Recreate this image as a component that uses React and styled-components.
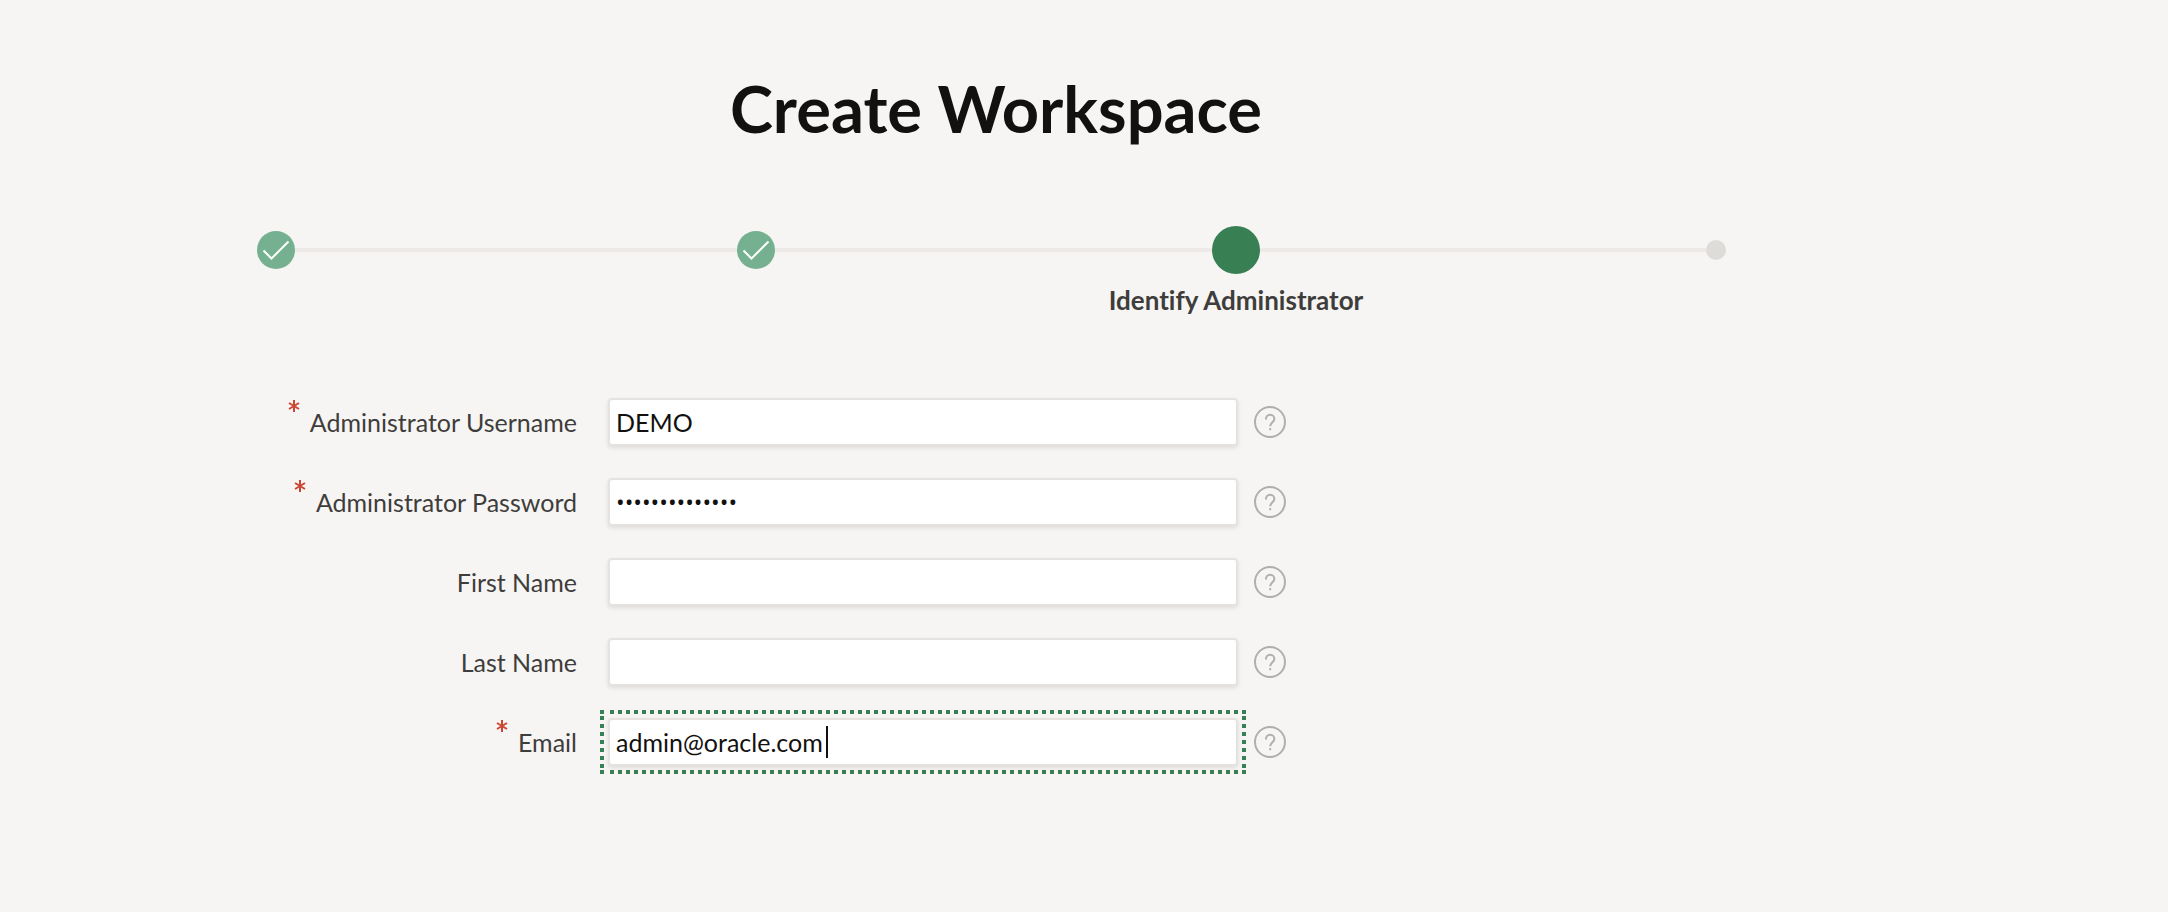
import React, { useState } from 'react';
import styled, { createGlobalStyle } from 'styled-components';

const GlobalStyle = createGlobalStyle`
  *, *::before, *::after { box-sizing: border-box; }
  body {
    margin: 0;
    background: #f6f5f3;
    color: #3f3d3b;
    font-family: Lato, "Open Sans", sans-serif;
    font-size: 25px;
    font-variant-ligatures: none;
    line-height: 32px;
  }
`;

const Page = styled.main`
  padding: 64px 212px 136px 36px;
`;

const Title = styled.h1`
  margin: 0;
  color: #12110f;
  font-size: 65px;
  font-weight: 700;
  line-height: 88px;
  text-align: center;
`;

const Steps = styled.ol`
  display: grid;
  grid-template-columns: repeat(4, 1fr);
  margin: 72px 0 0;
  padding: 0;
  list-style: none;
`;

const Step = styled.li`
  display: grid;
  justify-items: center;
  align-content: start;
  row-gap: 8px;
`;

const Track = styled.div`
  display: grid;
  grid-template-columns: 1fr auto 1fr;
  align-items: center;
  width: 100%;
  height: 52px;
`;

const Rail = styled.span`
  height: 4px;
  background: ${(p) => (p.$hidden ? 'transparent' : '#ece9e6')};
`;

const markers = {
  done: { size: 38, color: '#75b190' },
  current: { size: 48, color: '#387f54' },
  todo: { size: 20, color: '#dedcd8' },
};

const Marker = styled.span`
  display: block;
  width: ${(p) => markers[p.$state].size}px;
  height: ${(p) => markers[p.$state].size}px;
  border-radius: 50%;
  background: ${(p) => markers[p.$state].color};

  svg { display: block; }
`;

const StepLabel = styled.span`
  font-size: 26px;
  font-weight: 700;
`;

const Form = styled.form`
  display: grid;
  row-gap: 32px;
  margin-top: 82px;
`;

const Row = styled.div`
  display: grid;
  grid-template-columns: 556px minmax(0, 630px) 32px;
  align-items: center;
  column-gap: 16px;
`;

const Label = styled.label`
  display: flex;
  align-items: center;
  align-self: stretch;
  justify-content: flex-end;
  gap: 10px;
  padding-right: 15px;
`;

const Required = styled.svg`
  display: block;
  flex: none;
  align-self: flex-start;
  width: 12px;
  height: 12px;
  margin-top: 2px;
`;

const Field = styled.div`
  position: relative;
  display: flex;

  ${(p) =>
    p.$active &&
    `
    --dot: linear-gradient(#387f54 0 0);
    --across: repeating-linear-gradient(90deg, #387f54 0 4px, transparent 4px 8px);
    --down: repeating-linear-gradient(#387f54 0 4px, transparent 4px 8px);
    &::before {
      content: '';
      position: absolute;
      inset: -8px;
      pointer-events: none;
      background:
        var(--dot) 0 0 / 4px 4px,
        var(--dot) 100% 0 / 4px 4px,
        var(--dot) 0 100% / 4px 4px,
        var(--dot) 100% 100% / 4px 4px,
        var(--across) 10px 0 / calc(100% - 18px) 4px,
        var(--across) 10px 100% / calc(100% - 18px) 4px,
        var(--down) 0 6px / 4px calc(100% - 12px),
        var(--down) 100% 6px / 4px calc(100% - 12px);
      background-repeat: no-repeat;
    }
  `}
`;

const Input = styled.input`
  width: 100%;
  height: 48px;
  padding: 0 6px;
  border: 2px solid #e5e2df;
  border-radius: 4px;
  outline: none;
  background: #fff;
  box-shadow: 0 2px 4px rgba(0, 0, 0, 0.1);
  color: #12110f;
  font-family: inherit;
  font-size: 25px;
  line-height: 32px;

  &[type='password'] {
    font-family: "Open Sans", sans-serif;
    font-size: 23px;
  }
`;

const Caret = styled.span`
  position: absolute;
  top: 8px;
  left: 218px;
  width: 2px;
  height: 32px;
  background: #12110f;
`;

const HelpButton = styled.button`
  display: block;
  width: 32px;
  height: 32px;
  padding: 0;
  border: 0;
  background: none;
  cursor: pointer;

  svg { display: block; }
`;

const steps = [
  { state: 'done', name: 'Identify Workspace' },
  { state: 'done', name: 'Identify Schema' },
  { state: 'current', name: 'Identify Administrator' },
  { state: 'todo', name: 'Confirm Request' },
];

const fields = [
  { id: 'username', label: 'Administrator Username', required: true, value: 'DEMO' },
  { id: 'password', label: 'Administrator Password', required: true, type: 'password', value: 'Workspace-2024' },
  { id: 'first', label: 'First Name', value: '' },
  { id: 'last', label: 'Last Name', value: '' },
  { id: 'email', label: 'Email', required: true, value: 'admin@oracle.com', active: true },
];

function CheckMark() {
  return (
    <svg viewBox="0 0 38 38" width="38" height="38" fill="none" stroke="#fff" strokeWidth="2">
      <path d="M6.5 19.5 L14.5 27.5 L31.5 10.5" />
    </svg>
  );
}

function Asterisk() {
  return (
    <Required viewBox="0 0 12 12" fill="none" stroke="#cc4733" strokeWidth="2" aria-hidden="true">
      <path d="M6 0V12M1 3L11 9M11 3L1 9" />
    </Required>
  );
}

function Help({ name }) {
  return (
    <HelpButton type="button" aria-label={`Help: ${name}`}>
      <svg viewBox="0 0 32 32" width="32" height="32" fill="none" stroke="#b1afae" strokeWidth="2">
        <circle cx="16" cy="16" r="15" />
        <path d="M12 13.5V13A4.2 4.2 0 0 1 20.4 13C20.4 16 16.2 16.6 16.2 20.2" />
        <path d="M15.2 23.2H17.2" />
      </svg>
    </HelpButton>
  );
}

function FormRow({ field }) {
  const [value, setValue] = useState(field.value);
  return (
    <Row>
      <Label htmlFor={field.id}>
        {field.required && <Asterisk />}
        {field.label}
      </Label>
      <Field $active={field.active}>
        <Input
          id={field.id}
          type={field.type || 'text'}
          required={field.required}
          value={value}
          onChange={(e) => setValue(e.target.value)}
        />
        {field.active && <Caret />}
      </Field>
      <Help name={field.label} />
    </Row>
  );
}

export default function App() {
  return (
    <>
      <GlobalStyle />
      <Page>
        <Title>Create Workspace</Title>
        <Steps>
          {steps.map((step, i) => (
            <Step key={step.name} aria-label={step.name}>
              <Track>
                <Rail $hidden={i === 0} />
                <Marker $state={step.state}>{step.state === 'done' && <CheckMark />}</Marker>
                <Rail $hidden={i === steps.length - 1} />
              </Track>
              {step.state === 'current' && <StepLabel>{step.name}</StepLabel>}
            </Step>
          ))}
        </Steps>
        <Form>
          {fields.map((field) => (
            <FormRow key={field.id} field={field} />
          ))}
        </Form>
      </Page>
    </>
  );
}
